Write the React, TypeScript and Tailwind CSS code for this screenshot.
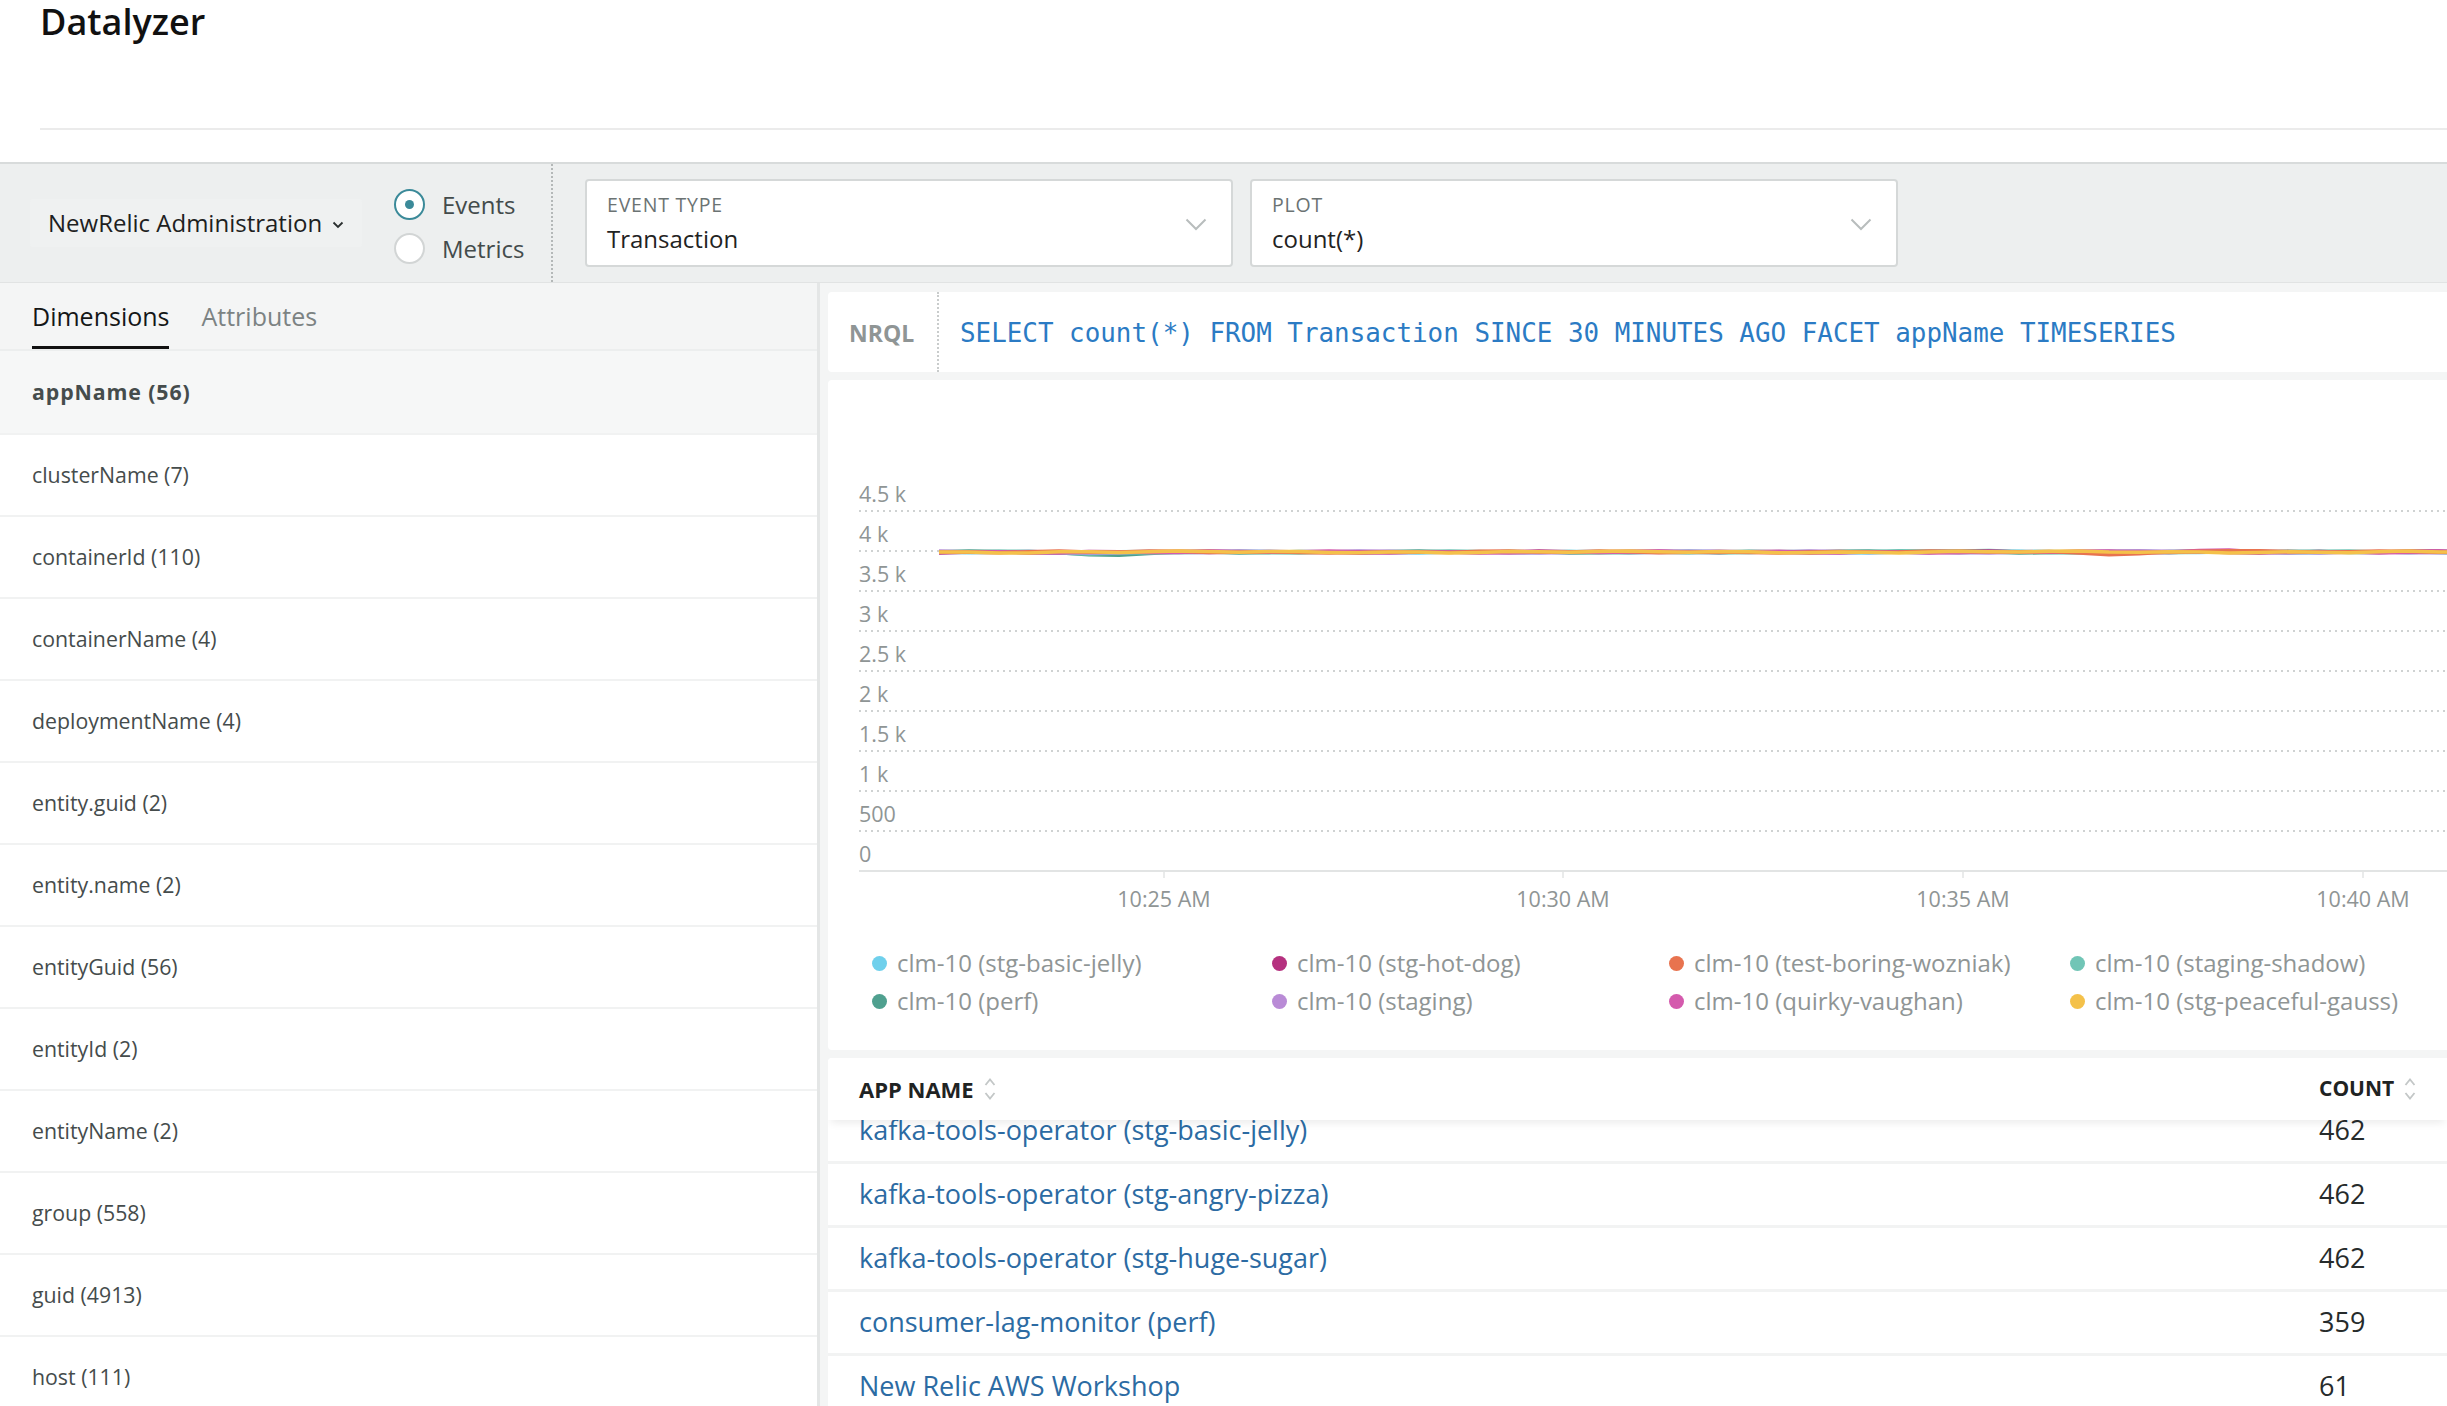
import React from 'react';

/** 左侧维度列表 */
const DIMENSIONS = [
  'appName (56)',
  'clusterName (7)',
  'containerId (110)',
  'containerName (4)',
  'deploymentName (4)',
  'entity.guid (2)',
  'entity.name (2)',
  'entityGuid (56)',
  'entityId (2)',
  'entityName (2)',
  'group (558)',
  'guid (4913)',
  'host (111)',
  'hostname (111)',
];

/** 图例 / 曲线 */
const SERIES = [
  { name: 'clm-10 (stg-basic-jelly)', color: '#6fd0ec' },
  { name: 'clm-10 (stg-hot-dog)', color: '#b5317f' },
  { name: 'clm-10 (test-boring-wozniak)', color: '#e8734f' },
  { name: 'clm-10 (staging-shadow)', color: '#71c5b6' },
  { name: 'clm-10 (perf)', color: '#4fa08f' },
  { name: 'clm-10 (staging)', color: '#b98bd6' },
  { name: 'clm-10 (quirky-vaughan)', color: '#d45aad' },
  { name: 'clm-10 (stg-peaceful-gauss)', color: '#f4c14a' },
];

const ROWS = [
  ['kafka-tools-operator (stg-basic-jelly)', '462'],
  ['kafka-tools-operator (stg-angry-pizza)', '462'],
  ['kafka-tools-operator (stg-huge-sugar)', '462'],
  ['consumer-lag-monitor (perf)', '359'],
  ['New Relic AWS Workshop', '61'],
  ['New Relic AWS Workshop (staging)', '58'],
];

const Y_LABELS = ['4.5 k', '4 k', '3.5 k', '3 k', '2.5 k', '2 k', '1.5 k', '1 k', '500', '0'];
const X_TICKS = [
  { x: 336, label: '10:25 AM' },
  { x: 735, label: '10:30 AM' },
  { x: 1135, label: '10:35 AM' },
  { x: 1535, label: '10:40 AM' },
];

/** 生成一条几乎水平的曲线 */
function seriesPath(seed: number, bumps: { at: number; dy: number }[] = []) {
  const pts: string[] = [];
  for (let i = 0; i <= 52; i++) {
    const x = 111 + i * 30;
    let y = 172 + Math.sin(i * 1.7 + seed * 2.3) * 0.6 + Math.sin(i * 0.45 + seed) * 0.5;
    for (const b of bumps) {
      const d = (x - b.at) / 40;
      y += b.dy * Math.exp(-d * d);
    }
    pts.push(`${x},${y.toFixed(1)}`);
  }
  return 'M' + pts.join(' L');
}

function SortIcon() {
  return (
    <svg width="12" height="28" viewBox="0 0 12 28" className="ml-[10px]">
      <polyline points="1.5,10 6,4.5 10.5,10" fill="none" stroke="#c3c7c7" strokeWidth="1.8" />
      <polyline points="1.5,18 6,23.5 10.5,18" fill="none" stroke="#c3c7c7" strokeWidth="1.8" />
    </svg>
  );
}

function SelectBox({ label, value }: { label: string; value: string }) {
  return (
    <div className="flex h-[88px] w-[648px] items-center rounded-[4px] border-2 border-[#d5d8d8] bg-white pl-[20px] pr-[24px]">
      <div className="flex-1 self-stretch pt-[14px]">
        <div className="text-[19.5px] leading-[20px] tracking-[0.8px] text-[#6b7373]">{label}</div>
        <div className="mt-[8px] text-[24px] leading-[32px] text-[#1f2323]">{value}</div>
      </div>
      <svg width="22" height="13" viewBox="0 0 22 13" className="mt-[3px]">
        <polyline points="1.5,1.5 11,11 20.5,1.5" fill="none" stroke="#b8bdbd" strokeWidth="2" />
      </svg>
    </div>
  );
}

function Toolbar() {
  return (
    <div className="flex h-[121px] items-center border-t-2 border-b border-t-[#d8dbdb] border-b-[#e1e3e3] bg-[#edefef]">
      {/* 账户选择 */}
      <div className="ml-[30px] flex h-[48px] w-[332px] items-center rounded-[3px] bg-[#eff1f1] pl-[18px] text-[24px] text-[#1d2121]">
        NewRelic Administration
        <svg width="12" height="8" viewBox="0 0 12 8" className="ml-[10px] mt-[4px]">
          <polyline points="1.5,1.5 6,6 10.5,1.5" fill="none" stroke="#2a2f2f" strokeWidth="1.8" />
        </svg>
      </div>
      {/* 事件 / 指标 */}
      <div className="ml-[32px] mt-[6px] flex w-[157px] flex-col gap-[13px]">
        <div className="flex items-center gap-[17px]">
          <div className="flex h-[31px] w-[31px] items-center justify-center rounded-full border-2 border-[#3b8a99] bg-white">
            <div className="h-[9px] w-[9px] rounded-full bg-[#3b8a99]" />
          </div>
          <span className="text-[24px] leading-[31px] text-[#434b4b]">Events</span>
        </div>
        <div className="flex items-center gap-[17px]">
          <div className="h-[31px] w-[31px] rounded-full border-2 border-[#d2d5d5] bg-white" />
          <span className="text-[24px] leading-[31px] text-[#434b4b]">Metrics</span>
        </div>
      </div>
      <div className="self-stretch border-l-2 border-dotted border-[#b4b8b8]" />
      <div className="ml-[32px] flex gap-[17px]">
        <SelectBox label="EVENT TYPE" value="Transaction" />
        <SelectBox label="PLOT" value="count(*)" />
      </div>
    </div>
  );
}

function DimensionPanel() {
  return (
    <div className="w-[820px] shrink-0 border-r-[3px] border-[#e4e6e6] bg-white">
      <div className="flex h-[68px] items-end gap-[32px] border-b-2 border-[#eceeee] bg-[#f4f5f5] px-[32px]">
        <div className="border-b-[3px] border-[#111] pb-[14px] text-[25px] leading-[32px] text-[#141717]">Dimensions</div>
        <div className="pb-[17px] text-[25px] leading-[32px] text-[#7c8383]">Attributes</div>
      </div>
      {DIMENSIONS.map((d, i) => (
        <div
          key={d}
          className={
            i === 0
              ? 'flex h-[82px] items-center bg-[#f6f7f7] px-[32px] text-[21.3px] font-bold tracking-[0.9px] text-[#454c4c]'
              : 'flex h-[82px] items-center border-t-2 border-[#f1f2f2] px-[32px] text-[21.3px] text-[#454c4c]'
          }
        >
          {d}
        </div>
      ))}
    </div>
  );
}

function Chart() {
  const order = [4, 3, 0, 5, 1, 6, 2, 7];
  const bumps: Record<number, { at: number; dy: number }[]> = {
    4: [{ at: 272, dy: 3.5 }],
    3: [{ at: 272, dy: 2.5 }, { at: 1140, dy: -1.5 }],
    2: [{ at: 1290, dy: 2 }, { at: 1393, dy: -2 }],
    6: [{ at: 1393, dy: -1.5 }],
  };
  return (
    <div className="h-[670px] overflow-hidden rounded-l-[4px] bg-white">
      <svg width="1619" height="564" className="block font-['Open_Sans',sans-serif]">
        {Y_LABELS.map((l, i) => (
          <g key={l}>
            <text x="31" y={122 + i * 40} fontSize="21.5" fill="#8f9595">
              {l}
            </text>
            {i < 9 && (
              <line x1="31" x2="1619" y1={131 + i * 40} y2={131 + i * 40} stroke="#cfd2d2" strokeWidth="2" strokeDasharray="2 4" />
            )}
          </g>
        ))}
        <line x1="31" x2="1619" y1="491" y2="491" stroke="#e2e4e4" strokeWidth="2" />
        {X_TICKS.map((t) => (
          <g key={t.label}>
            <line x1={t.x} x2={t.x} y1="492" y2="498" stroke="#d4d7d7" strokeWidth="1" />
            <text x={t.x} y="527" fontSize="21.5" fill="#8f9595" textAnchor="middle">
              {t.label}
            </text>
          </g>
        ))}
        {order.map((i) => (
          <path key={i} d={seriesPath(i, bumps[i] || [])} fill="none" stroke={SERIES[i].color} strokeWidth="3.5" strokeLinejoin="round" />
        ))}
      </svg>
      {/* 图例 */}
      <div className="grid grid-cols-[400px_397px_401px_1fr] pl-[44px]">
        {SERIES.map((s) => (
          <div key={s.name} className="flex h-[38px] items-center gap-[10px]">
            <span className="h-[15px] w-[15px] rounded-full" style={{ backgroundColor: s.color }} />
            <span className="text-[24px] text-[#8f9595]">{s.name}</span>
          </div>
        ))}
      </div>
    </div>
  );
}

function ResultTable() {
  return (
    <div className="flex-1 overflow-hidden rounded-tl-[4px] bg-white">
      <div className="relative z-10 flex h-[62px] items-center bg-white pl-[31px] shadow-[0_6px_8px_-3px_rgba(0,0,0,0.08)]">
        <div className="flex flex-1 items-center text-[22px] font-bold text-[#1f2323]">
          APP NAME
          <SortIcon />
        </div>
        <div className="flex w-[128px] items-center text-[21px] font-bold text-[#1f2323]">
          COUNT
          <SortIcon />
        </div>
      </div>
      <div className="-mt-[20px]">
        {ROWS.map(([name, count]) => (
          <div key={name} className="flex h-[64px] items-center border-b-[3px] border-[#f2f3f3] pl-[31px] text-[27px]">
            <span className="flex-1 text-[#2c6ba3]">{name}</span>
            <span className="w-[128px] text-[#262b2b]">{count}</span>
          </div>
        ))}
      </div>
    </div>
  );
}

export default function App() {
  return (
    <div className="flex h-[1406px] w-[2447px] flex-col overflow-hidden bg-white font-['Open_Sans',sans-serif] text-[#1f2323]">
      {/* 标题 */}
      <div className="shrink-0 pb-[32px]">
        <h1 className="pl-[40px] text-[36px] leading-[43px] font-semibold text-[#111]">Datalyzer</h1>
        <div className="ml-[40px] mt-[85px] h-[2px] bg-[#ebebeb]" />
      </div>
      <Toolbar />
      <div className="flex min-h-0 flex-1">
        <DimensionPanel />
        <div className="flex min-w-0 flex-1 flex-col gap-[8px] bg-[#f4f5f5] pl-[8px] pt-[9px]">
          {/* NRQL */}
          <div className="flex h-[80px] shrink-0 items-center rounded-l-[4px] bg-white">
            <div className="w-[109px] pl-[21px] pt-[2px] text-[23px] font-bold text-[#8f9595]">NRQL</div>
            <div className="self-stretch border-l-2 border-dotted border-[#c9cccc]" />
            <div className="whitespace-nowrap pl-[21px] pt-[2px] font-['DejaVu_Sans_Mono',monospace] text-[25.9px] text-[#2b7bc4]">
              SELECT count(*) FROM Transaction SINCE 30 MINUTES AGO FACET appName TIMESERIES
            </div>
          </div>
          <div className="shrink-0">
            <Chart />
          </div>
          <ResultTable />
        </div>
      </div>
    </div>
  );
}
